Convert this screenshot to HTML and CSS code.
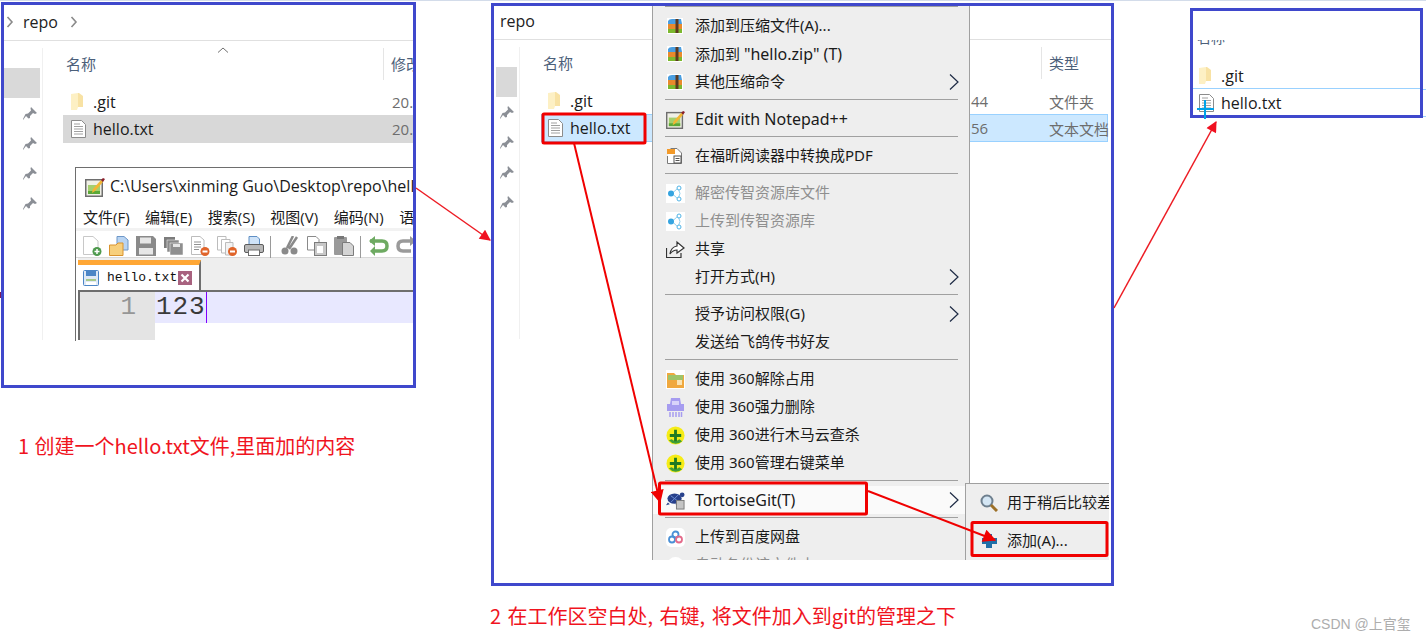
FILE: index.html
```html
<!DOCTYPE html>
<html lang="zh">
<head>
<meta charset="utf-8">
<title>hello.txt</title>
<link rel="stylesheet" href="styles.css">
</head>
<body>
<svg class="defs" xmlns="http://www.w3.org/2000/svg">
  <symbol id="folder" viewBox="0 0 12 18"><path d="M0 1 L7 0 V3 H12 V14 L7 14 L6 17 L0 17Z" fill="#fdf0c4"/><path d="M7 0 L7 14 H12 V3 L8 0Z" fill="#f8e2a4"/></symbol>
  <symbol id="file" viewBox="0 0 15 18"><path d="M.5.5H10.5L14.5 4.5V17.5H.5Z" fill="#fff" stroke="#8c8c8c"/><path d="M3 4H9M3 6.5H12M3 9H12M3 11.5H12M3 14H12" stroke="#a0a0a0"/></symbol>
  <symbol id="pin" viewBox="0 0 14 14"><path d="M8 0 L14 6 L12 7 L10 6 L7 9 L7 11 L5.500 11.500 L3 9 L0 13 L0 12 L2 8 L2.500 7 L5 6.500 L8 3.500 L7.500 1.500Z" fill="#8b8f96"/></symbol>
  <symbol id="rar" viewBox="0 0 16 16"><rect width="16" height="16" fill="#fff"/><path d="M1 6 V3 Q2 1 5 1 H14 L15 6Z" fill="#4a9ee0"/><rect x="1" y="6" width="14" height="5" fill="#e88a2c"/><rect x="1" y="11" width="14" height="4" fill="#7cb82f"/><rect x="8.500" y="1" width="3" height="14" fill="#5c3a20"/></symbol>
  <symbol id="node" viewBox="0 0 19 19"><rect width="19" height="19" fill="#fff"/><path d="M6 9.500L12 4M6 9.500L12 15M12 4L14 9.500 12 15" stroke="#8ed0ef" fill="none"/><circle cx="5" cy="9.500" r="3" fill="#35a4e0"/><circle cx="13" cy="4" r="2" fill="#fff" stroke="#50b4e6"/><circle cx="13" cy="15" r="2" fill="#fff" stroke="#50b4e6"/></symbol>
  <symbol id="chev" viewBox="0 0 10 16"><path d="M1 .5L9 8 1 15.500" fill="none" stroke="#1d2a44" stroke-width="1.200"/></symbol>
  <symbol id="npp" viewBox="0 0 20 20"><rect x=".75" y="2.750" width="16.500" height="16.500" fill="#f0f0e6" stroke="#6e6e6e" stroke-width="1.500"/><rect x="3" y="8" width="12" height="9" fill="#a4cf6e"/><rect x="3" y="14" width="12" height="3" fill="#5ba838"/><path d="M7 16L8 12 16 3 18 5 10 14Z" fill="#f2b632"/><path d="M16 3L18 1 20 2 18 5Z" fill="#8a1f2a"/></symbol>
  <symbol id="plus360" viewBox="0 0 20 20"><circle cx="10" cy="10" r="9.500" fill="#f6ec17"/><path d="M3 15A9.500 9.500 0 0 0 17 16L14 14A6 6 0 0 1 6 14Z" fill="#3e9e36"/><path d="M8.500 4H11.500V8.500H16V11.500H11.500V16H8.500V11.500H4V8.500H8.500Z" fill="#1f7a22"/></symbol>
</svg>

<main class="canvas">

  <section class="panel panel-one">
    <header class="addr addr-one">
      <svg class="crumb" viewBox="0 0 8 12"><path d="M1.500 1L6 6 1.500 11" fill="none" stroke="#8a8a8a" stroke-width="1.600"/></svg>
      <span class="addr-text">repo</span>
      <svg class="crumb" viewBox="0 0 8 12"><path d="M1.500 1L6 6 1.500 11" fill="none" stroke="#8a8a8a" stroke-width="1.600"/></svg>
    </header>
    <div class="body">
      <nav class="nav nav-one">
        <div class="nav-sel"></div>
        <svg class="pin"><use href="#pin"/></svg>
        <svg class="pin"><use href="#pin"/></svg>
        <svg class="pin"><use href="#pin"/></svg>
        <svg class="pin"><use href="#pin"/></svg>
      </nav>
      <div class="list list-one">
        <svg class="sort" viewBox="0 0 12 6"><path d="M1 5.500L6 1 11 5.500" fill="none" stroke="#707070"/></svg>
        <div class="cols cols-one">
          <span class="col-name">名称</span>
          <span class="col-rest">修改</span>
        </div>
        <div class="row row-one row-top">
          <svg class="ico-folder"><use href="#folder"/></svg>
          <span class="name">.git</span>
          <span class="meta">20.</span>
        </div>
        <div class="row row-one row-grey">
          <svg class="ico-file"><use href="#file"/></svg>
          <span class="name">hello.txt</span>
          <span class="meta">20.</span>
        </div>

        <div class="npp">
          <div class="npp-title">
            <svg class="npp-ico"><use href="#npp"/></svg>
            <span>C:\Users\xinming Guo\Desktop\repo\hello.txt</span>
          </div>
          <div class="npp-menu">
            <span>文件(F)</span><span>编辑(E)</span><span>搜索(S)</span><span>视图(V)</span><span>编码(N)</span><span>语言(L)</span>
          </div>
          <div class="npp-tools">
            <svg class="tool" viewBox="0 0 20 20"><path d="M1.500 .5H11L16 5V18.500H1.500Z" fill="#fff" stroke="#c8c8c8"/><circle cx="15" cy="15.500" r="4.500" fill="#4f9a4e"/><path d="M15 13V18M12.500 15.500H17.500" stroke="#fff" stroke-width="1.500"/></svg>
            <svg class="tool" viewBox="0 0 20 20"><path d="M8 .5H15L19 4V14H8Z" fill="#b9d4f2" stroke="#6d97c8"/><path d="M.5 9H7L9 7H14V19.500H.5Z" fill="#f7cf7c" stroke="#d9932e"/></svg>
            <svg class="tool" viewBox="0 0 20 20"><path d="M0 0H17L20 3V20H0Z" fill="#8a8a8a"/><rect x="4" y="1.500" width="11" height="6" fill="#e6e6e6"/><rect x="3" y="12" width="14" height="6.500" fill="#e6e6e6"/></svg>
            <svg class="tool" viewBox="0 0 20 20"><rect x="1" y="1" width="11" height="11" fill="#7c7c7c"/><rect x="4" y="4" width="12" height="12" fill="#8a8a8a" stroke="#fff" stroke-width=".5"/><rect x="7" y="7" width="13" height="12" fill="#8f8f8f" stroke="#fff" stroke-width=".5"/><rect x="10" y="8" width="7" height="3" fill="#e6e6e6"/></svg>
            <svg class="tool" viewBox="0 0 20 20"><path d="M1.500 .5H10L14 4V18.500H1.500Z" fill="#fff" stroke="#bcbcbc"/><path d="M4 6H11M4 8.500H11M4 11H11M4 13.500H9" stroke="#909090"/><circle cx="15" cy="15.500" r="4.500" fill="#e0642a"/><rect x="12.500" y="14.500" width="5" height="2" fill="#fff"/></svg>
            <svg class="tool" viewBox="0 0 20 20"><path d="M.5.5H9V14H.5Z" fill="#fff" stroke="#bcbcbc"/><path d="M4.500 3.500H13V17H4.500Z" fill="#fff" stroke="#bcbcbc"/><path d="M8.500 6.500H16V19H8.500Z" fill="#f2f2f2" stroke="#bcbcbc"/><circle cx="15.500" cy="15.500" r="4.500" fill="#e0642a"/><rect x="13" y="14.500" width="5" height="2" fill="#fff"/></svg>
            <svg class="tool" viewBox="0 0 20 20"><path d="M5 .5H13L15.500 3V9H5Z" fill="#cfe3f8" stroke="#5f8fc4"/><rect x=".5" y="8.500" width="19" height="8" rx="1.500" fill="#b8b8b8" stroke="#5c5c5c"/><rect x="4.500" y="14" width="11" height="5.500" fill="#fff" stroke="#6c6c6c"/></svg>
            <span class="tool-sep"></span>
            <svg class="tool tool-cut" viewBox="0 0 20 20"><path d="M13 0L7 12M17 1L9 13" stroke="#8a8a8a" stroke-width="2.500"/><circle cx="5" cy="15" r="3.500" fill="#8a8a8a"/><circle cx="14" cy="15" r="3.500" fill="#8a8a8a"/></svg>
            <svg class="tool" viewBox="0 0 20 20"><path d="M.5.5H9L12 3.500V14H.5Z" fill="#fff" stroke="#8a8a8a"/><rect x="7.500" y="6.500" width="12" height="13" fill="#c8c8c8" stroke="#7c7c7c"/><rect x="10" y="10" width="6" height="7" fill="#fff"/></svg>
            <svg class="tool" viewBox="0 0 20 20"><rect x="0" y="1" width="13" height="18" rx="1" fill="#9a9a9a"/><rect x="3" y="0" width="7" height="3" fill="#777"/><path d="M8.500 6.500H16L19.500 10V19.500H8.500Z" fill="#d4d4d4" stroke="#7c7c7c"/></svg>
            <span class="tool-sep"></span>
            <svg class="tool" viewBox="0 0 20 20"><path d="M1 5H13Q18 5 18 10T13 15H5" fill="none" stroke="#6eaa62" stroke-width="3.500"/><path d="M6 0V10L0 5ZM6 10V20L1 15Z" fill="#6eaa62"/></svg>
            <svg class="tool" viewBox="0 0 20 20"><path d="M19 5H7Q2 5 2 10T7 15H15" fill="none" stroke="#9a9a9a" stroke-width="3.500"/><path d="M14 0V10L20 5Z" fill="#9a9a9a"/></svg>
          </div>
          <div class="npp-tabs">
            <div class="tab">
              <svg class="tab-ico" viewBox="0 0 16 16"><rect x=".5" y=".5" width="15" height="15" rx="1" fill="#dfe9f6" stroke="#4c86c6"/><rect x="3" y="1" width="10" height="5" fill="#4c86c6"/><rect x="3" y="9" width="10" height="2" fill="#a6c98a"/><rect x="3" y="12" width="10" height="3" fill="#fff"/></svg>
              <span class="tab-name">hello.txt</span>
              <svg class="tab-x" viewBox="0 0 14 14"><rect width="14" height="14" fill="#a8627f"/><path d="M3.500 3.500L10.500 10.500M10.500 3.500L3.500 10.500" stroke="#fff" stroke-width="2.200"/></svg>
            </div>
          </div>
          <div class="npp-edit">
            <div class="gutter">1</div>
            <div class="line"><span class="code">123</span></div>
          </div>
        </div>
      </div>
    </div>
  </section>

  <section class="panel panel-two">
    <header class="addr addr-two"><span class="addr-text">repo</span></header>
    <div class="body">
      <nav class="nav nav-two">
        <div class="nav-sel"></div>
        <svg class="pin"><use href="#pin"/></svg>
        <svg class="pin"><use href="#pin"/></svg>
        <svg class="pin"><use href="#pin"/></svg>
        <svg class="pin"><use href="#pin"/></svg>
      </nav>
      <div class="list list-two">
        <div class="cols cols-two">
          <span class="col-name">名称</span>
          <span class="col-rest col-type">类型</span>
        </div>
        <div class="row row-two row-top">
          <svg class="ico-folder"><use href="#folder"/></svg>
          <span class="name">.git</span>
          <span class="meta">44</span>
          <span class="meta">文件夹</span>
        </div>
        <div class="row row-two row-blue">
          <svg class="ico-file"><use href="#file"/></svg>
          <span class="name">hello.txt</span>
          <span class="meta">56</span>
          <span class="meta">文本文档</span>
        </div>
      </div>
    </div>

    <div class="menu">
      <div class="sep sep-top"></div>
      <div class="item"><svg class="mi"><use href="#rar"/></svg><span>添加到压缩文件(A)...</span></div>
      <div class="item"><svg class="mi"><use href="#rar"/></svg><span class="mix">添加到 <b class="lat">"hello.zip" (T)</b></span></div>
      <div class="item"><svg class="mi"><use href="#rar"/></svg><span>其他压缩命令</span><svg class="chev"><use href="#chev"/></svg></div>
      <div class="sep"></div>
      <div class="item"><svg class="mi mi-big"><use href="#npp"/></svg><span class="mix lat">Edit with Notepad++</span></div>
      <div class="sep"></div>
      <div class="item"><svg class="mi" viewBox="0 0 16 16"><path d="M3.500 .5H10L14.500 5V15.500H.5V8" fill="#fff" stroke="#7a7a7a"/><rect x="0" y="1" width="8" height="5" fill="#f39a2a"/><rect x="7" y="8" width="7" height="7" fill="#fff" stroke="#555"/><path d="M8.500 10.500H12.500M8.500 12.500H12.500" stroke="#555"/></svg><span>在福昕阅读器中转换成PDF</span></div>
      <div class="sep"></div>
      <div class="item item-off"><svg class="mi mi-big"><use href="#node"/></svg><span>解密传智资源库文件</span></div>
      <div class="item item-off"><svg class="mi mi-big"><use href="#node"/></svg><span>上传到传智资源库</span></div>
      <div class="item"><svg class="mi mi-big" viewBox="0 0 19 19"><path d="M.5 8V17.500H15V13" fill="none" stroke="#333" stroke-width="1.200"/><path d="M4 14Q5 7 11 6V2L18 8 11 13V10Q7 10 4 14Z" fill="#fff" stroke="#333" stroke-width="1.200"/></svg><span>共享</span></div>
      <div class="item"><span class="mi-gap"></span><span>打开方式(H)</span><svg class="chev"><use href="#chev"/></svg></div>
      <div class="sep"></div>
      <div class="item"><span class="mi-gap"></span><span>授予访问权限(G)</span><svg class="chev"><use href="#chev"/></svg></div>
      <div class="item"><span class="mi-gap"></span><span>发送给飞鸽传书好友</span></div>
      <div class="sep"></div>
      <div class="item"><svg class="mi mi-big" viewBox="0 0 19 19"><rect width="19" height="19" fill="#fff"/><path d="M1 3H8L10 5H18V18H1Z" fill="#f0a83e"/><rect x="2" y="5" width="15" height="5" fill="#9ec46a"/><rect x="11" y="10" width="5" height="5" fill="#fbe3b2"/></svg><span>使用 360解除占用</span></div>
      <div class="item"><svg class="mi mi-big" viewBox="0 0 19 19"><path d="M5 0H14L15 6H18V13H1V6H4Z" fill="#a69cf0"/><rect x="6" y="3" width="7" height="4" fill="#d8d2fa"/><path d="M4 14V19M7 14V19M10 14V19M13 14V19M15.500 14V19" stroke="#a69cf0" stroke-width="1.500"/></svg><span>使用 360强力删除</span></div>
      <div class="item"><svg class="mi mi-big"><use href="#plus360"/></svg><span>使用 360进行木马云查杀</span></div>
      <div class="item"><svg class="mi mi-big"><use href="#plus360"/></svg><span>使用 360管理右键菜单</span></div>
      <div class="sep"></div>
      <div class="item item-hot"><svg class="mi mi-big" viewBox="0 0 20 18"><ellipse cx="9" cy="7" rx="7.500" ry="5.500" fill="#27408b"/><path d="M5 4L13 10M13 3L5 11" stroke="#6f8fd6"/><circle cx="17" cy="3" r="2.500" fill="#27408b"/><path d="M2 11L0 14 4 13ZM13 11L15 15 10 13Z" fill="#27408b"/><rect x="11" y="9" width="8" height="9" fill="#c4c4c4" stroke="#7a7a7a"/></svg><span class="mix lat">TortoiseGit(T)</span><svg class="chev"><use href="#chev"/></svg></div>
      <div class="sep"></div>
      <div class="item"><svg class="mi mi-big" viewBox="0 0 19 19"><rect width="19" height="19" rx="5" fill="#fff"/><circle cx="9.500" cy="6.500" r="3" fill="none" stroke="#4a90d6" stroke-width="1.800"/><circle cx="6" cy="11.500" r="3" fill="none" stroke="#4a90d6" stroke-width="1.800"/><circle cx="13" cy="11.500" r="3" fill="none" stroke="#e46a8a" stroke-width="1.800"/></svg><span>上传到百度网盘</span></div>
      <div class="item item-off"><svg class="mi mi-big" viewBox="0 0 19 19"><circle cx="9.500" cy="9.500" r="8.500" fill="#fff"/><circle cx="9.500" cy="9.500" r="5" fill="#7cc4ea"/></svg><span>自动备份该文件夹</span></div>
    </div>

    <div class="submenu">
      <div class="item sub-item"><svg class="smi" viewBox="0 0 18 18"><circle cx="7" cy="7" r="5.500" fill="#d4e6f4" stroke="#6e7f8e" stroke-width="2"/><path d="M11 11L17 17" stroke="#9c7028" stroke-width="3"/></svg><span>用于稍后比较差异</span></div>
      <div class="item sub-item"><svg class="smi" viewBox="0 0 18 18"><path d="M6 2H12V6H17V12H12V16H6V12H2V6H6Z" fill="#1f6fa8"/></svg><span>添加(A)...</span></div>
      <div class="item sub-item"><svg class="smi" viewBox="0 0 18 18"><circle cx="9" cy="9" r="8" fill="#5a3a30"/></svg></div>
    </div>
  </section>

  <section class="panel panel-three">
    <div class="cut-head"><span>名称</span></div>
    <div class="row row-three row-line">
      <svg class="ico-folder"><use href="#folder"/></svg>
      <span class="name">.git</span>
    </div>
    <div class="row row-three">
      <svg class="ico-file"><use href="#file"/></svg>
      <span class="name">hello.txt</span>
    </div>
  </section>

  <p class="note note-one">1 创建一个hello.txt文件,里面加的内容</p>
  <p class="note note-two">2 在工作区空白处, 右键, 将文件加入到git的管理之下</p>
  <p class="mark">CSDN @上官玺</p>

  <svg class="marks" viewBox="0 0 1426 640" xmlns="http://www.w3.org/2000/svg">
    <defs>
      <marker id="head" viewBox="0 0 10 10" refX="9" refY="5" markerWidth="13" markerHeight="11" markerUnits="userSpaceOnUse" orient="auto"><path d="M0 0L10 5 0 10Z" fill="#f01020"/></marker>
      <marker id="headb" viewBox="0 0 10 10" refX="9" refY="5" markerWidth="16" markerHeight="13" markerUnits="userSpaceOnUse" orient="auto"><path d="M0 0L10 5 0 10Z" fill="#f00000"/></marker>
    </defs>
    <rect class="box" x="543" y="114" width="102" height="29" rx="1"/>
    <rect class="box" x="659.500" y="483" width="207" height="31" rx="1"/>
    <rect class="box" x="972" y="522.500" width="135" height="33" rx="1"/>
    <line class="thin" x1="416" y1="188" x2="490" y2="240" marker-end="url(#head)"/>
    <line class="bold" x1="574" y1="143" x2="660" y2="502" marker-end="url(#headb)"/>
    <line class="bold" x1="868" y1="491" x2="995" y2="540" marker-end="url(#headb)"/>
    <line class="thin" x1="1114" y1="308" x2="1216" y2="122" marker-end="url(#head)"/>
    <path class="cursor" d="M1197 109H1214M1205 100V119"/>
    <path class="tick" d="M1423 89.500H1426M1423 116.500H1426"/>
    <rect class="speck" x="0" y="292" width="1" height="6"/>
  </svg>
</main>
</body>
</html>
```

FILE: styles.css
```css
* { box-sizing: border-box; }
html, body { margin: 0; padding: 0; background: #fff; }
body { font-family: "Open Sans", "Noto Sans CJK SC", sans-serif; color: #1a1a1a; }
.defs { display: none; }

.canvas { position: relative; width: 1426px; height: 640px; overflow: hidden; background: #fff; border-top: 1px solid #d3dcea; }

/* Panels: screenshots pasted on a free canvas */
.panel { position: absolute; border: 3px solid #3f48cc; background: #fff; overflow: hidden; }
.panel-one { left: 1px; top: 1px; width: 415px; height: 386px; }
.panel-two { left: 491px; top: 2px; width: 623px; height: 583px; }
.panel-three { left: 1190px; top: 7px; width: 233px; height: 110px; }

.addr { display: flex; align-items: center; height: 35px; border-bottom: 1px solid #e0e0e0; font-size: 16px; }
.addr-one { gap: 6px; padding-left: 2px; height: 36px; }
.addr-two { padding-left: 6px; height: 34px; padding-bottom: 4px; }
.addr-text { color: #222; }
.crumb { width: 8px; height: 12px; flex: none; margin-top: -2px; }
.addr-one .addr-text { padding: 0 6px 2px 3px; }

.body { display: flex; height: 300px; }
.nav { flex: none; display: flex; flex-direction: column; align-items: flex-end; border-right: 1px solid #f0f0f0; margin-top: 7px; padding-top: 20px; }
.panel-one .nav { height: 292px; }
.panel-two .nav { height: 292px; }
.nav-one { width: 39px; }
.nav-two { width: 26px; }
.nav-sel { height: 30px; background: #d9d9d9; align-self: stretch; margin-right: 2px; margin-bottom: 9px; flex: none; }
.nav-two .nav-sel { margin-left: 2px; }
.pin { width: 14px; height: 14px; margin: 0 5px 16px 0; flex: none; }

.list { flex: 1; position: relative; min-width: 0; }
.sort { position: absolute; left: 174px; top: 6px; width: 12px; height: 6px; }
.cols { display: grid; height: 33px; margin-top: 7px; margin-bottom: 6px; padding-left: 23px; font-size: 15px; color: #4c607a; }
.cols-one { grid-template-columns: 318px 1fr; }
.cols-two { grid-template-columns: 499px 1fr; }
.col-name { line-height: 32px; }
.col-rest { border-left: 1px solid #e5e5e5; padding-left: 7px; line-height: 32px; height: 32px; white-space: nowrap; margin-left: -1px; }

.row { display: grid; align-items: center; font-size: 15px; height: 28px; white-space: nowrap; }
.row-top { padding-top: 2px; }
.name { color: #1a1a1a; font-size: 16px; }
.meta { color: #6d6d6d; }
.row-one { margin-left: 20px; padding-left: 8px; grid-template-columns: 22px 299px 1fr; }
.row-two { margin-left: 21px; width: 567px; padding-left: 6px; grid-template-columns: 22px 401px 78px 1fr; border: 1px solid transparent; }
.row-grey { background: #d8d8d8; }
.row-blue { background: #cce8ff; border-color: #99d1ff; }
.ico-folder { width: 12px; height: 18px; }
.ico-file { width: 15px; height: 18px; }

/* Notepad++ */
.npp { margin: 24px 0 0 32px; height: 174px; border-left: 1px solid #6e6e6e; border-top: 1px solid #6e6e6e; overflow: hidden; background: #fff; }
.npp-title { display: flex; align-items: center; gap: 5px; height: 38px; padding-left: 9px; font-size: 16px; white-space: nowrap; }
.npp-title span { padding-bottom: 2px; }
.npp-menu { display: flex; gap: 15.500px; height: 22px; align-items: center; padding: 0 0 2px 7px; font-size: 15px; white-space: nowrap; }
.npp-ico { width: 20px; height: 20px; flex: none; }
.npp-menu span { flex: none; }
.npp-tools { display: flex; align-items: flex-start; gap: 7px; height: 30px; padding: 5px 0 0 6px; border-top: 3px solid #f2f2f2; border-bottom: 1px solid #d8d8d8; }
.tool { width: 20px; height: 20px; flex: none; }
.tool-sep { width: 1px; height: 22px; background: #9a9a9a; margin: 0 1px 0 -1px; flex: none; }
.tool-cut { margin-left: 1px; }
.npp-tabs { display: flex; height: 32px; margin-left: 2px; padding-top: 2px; background: #eeeeee; }
.tab { display: flex; align-items: center; width: 123px; height: 30px; background: #fff; border-top: 5px solid #ffa735; border-right: 2px solid #6e6e6e; padding-left: 5px; }
.tab-ico { width: 16px; height: 16px; flex: none; }
.tab-name { font: 13px "Liberation Mono", monospace; margin-left: 8px; color: #111; }
.tab-x { width: 14px; height: 14px; margin-left: 1px; flex: none; }
.npp-edit { display: flex; margin-left: 2px; height: 50px; border-top: 2px solid #6e6e6e; }
.gutter { width: 77px; flex: none; height: 100%; border-left: 2px solid #6e6e6e; background: #e4e4e4; color: #969696; font: 26px/30px "Liberation Mono", monospace; text-align: right; padding-right: 19px; }
.line { flex: 1; height: 31px; background: #e8e8ff; }
.code { display: inline-block; height: 31px; padding-left: 1px; border-right: 1px solid #8000ff; font: 26px/30px "Liberation Mono", monospace; letter-spacing: .9px; color: #3a3a3a; }

/* Context menu */
.menu { position: absolute; left: 158px; top: 0; width: 318px; height: 554px; overflow: hidden; background: #eeeeee; border-left: 1px solid #a0a0a0; border-right: 1px solid #a0a0a0; font-size: 15px; font-family: "Noto Sans", "Noto Sans CJK SC", sans-serif; }
.item { display: flex; align-items: center; height: 28px; padding-left: 12px; padding-right: 10px; white-space: nowrap; color: #1a1a1a; position: relative; }
.item > span { padding-bottom: 4px; }
.item > span.mix { padding-bottom: 0; }
.lat { font-size: 16px; font-weight: 400; }
.item-off { color: #8f8f8f; }
.item-hot { background: #fafafa; }
.mi { width: 16px; height: 16px; margin: 0 12px 0 2px; flex: none; }
.mi-big { width: 19px; height: 19px; margin: 0 10px 0 1px; }
.mi-gap { width: 30px; flex: none; }
.chev { width: 10px; height: 16px; margin-left: auto; flex: none; }
.sep { height: 9px; padding-top: 3px; }
.sep::before { content: ""; display: block; height: 1px; margin: 0 11px 0 12px; background: #a0a0a0; }
.sep-top { height: 6px; padding-top: 0; }

.submenu { position: absolute; left: 471px; top: 477px; width: 144px; height: 77px; overflow: hidden; background: #eeeeee; border-left: 1px solid #a0a0a0; border-top: 1px solid #a0a0a0; font-size: 15px; font-family: "Noto Sans", "Noto Sans CJK SC", sans-serif; padding-top: 5px; }
.sub-item { padding-left: 14px; margin-bottom: 10px; padding-right: 0; }
.sub-item:nth-child(2) { margin-bottom: 0; }
.smi { width: 18px; height: 18px; margin-right: 9px; flex: none; }

/* Third panel */
.cut-head { height: 6px; margin: 29px 0 0 4px; overflow: hidden; font-size: 14px; line-height: 14px; color: #4c607a; }
.cut-head span { display: block; margin-top: -9px; }
.row-three { grid-template-columns: 22px 1fr; padding-left: 6px; height: 27px; }
.row-line { margin-top: 16px; padding-top: 2px; border-bottom: 1px solid #99d1ff; }

/* Notes */
.note, .mark { position: absolute; margin: 0; white-space: nowrap; font-family: "Noto Sans CJK SC", sans-serif; }
.note { font-size: 20px; line-height: 28px; color: #f0141e; font-weight: 400; word-spacing: 1px; }
.note-one { left: 18px; top: 431px; }
.note-two { left: 490px; top: 601px; word-spacing: 2px; }
.mark { left: 1311px; top: 614px; font-size: 14px; line-height: 18px; color: #adadad; font-family: "Liberation Sans", "Noto Sans CJK SC", sans-serif; }

/* Annotation layer */
.marks { position: absolute; left: 0; top: -1px; width: 1426px; height: 640px; pointer-events: none; }
.box { fill: none; stroke: #f00000; stroke-width: 3; }
.thin { stroke: #ed1c24; stroke-width: 1.500; }
.bold { stroke: #f00000; stroke-width: 2; }
.cursor { fill: none; stroke: #00a2e8; stroke-width: 2; }
.tick { stroke: #99d1ff; stroke-width: 1; }
.speck { fill: #7a1a5a; }
```
